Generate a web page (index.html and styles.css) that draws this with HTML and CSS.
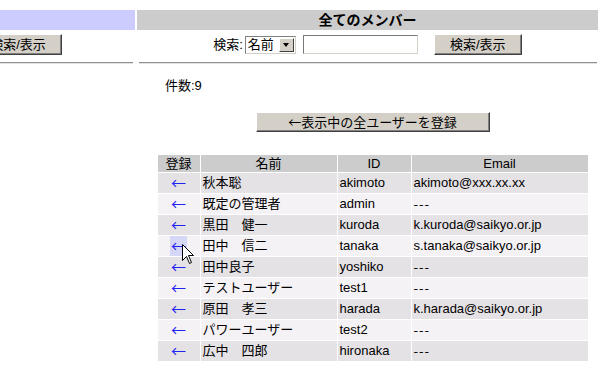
FILE: index.html
```html
<!DOCTYPE html>
<html>

<head>
  <title>全てのメンバー</title>
  <link rel="stylesheet" href="styles.css">
</head>

<body>
  <div class="page">
    <div class="side">
      <div class="side-head"></div>
      <div class="side-bar">
        <button class="btn btn-search btn-cut">検索/表示</button>
      </div>
      <hr class="rule rule-side">
    </div>

    <div class="main">
      <h1 class="main-head">全てのメンバー</h1>
      <form class="search">
        <label for="field">検索:</label>
        <span class="select">
          <select id="field">
            <option value="name">名前</option>
            <option value="id">ID</option>
          </select>
          <span class="select-arrow"></span>
        </span>
        <input type="text" class="query">
        <button type="button" class="btn btn-search">検索/表示</button>
      </form>
      <hr class="rule rule-main">

      <p class="count">件数:9</p>

      <div class="list">
        <button class="btn btn-register"><span class="jp">←表示中の全ユーザーを登録</span></button>

        <table class="members">
          <colgroup>
            <col class="col-add">
            <col class="col-name">
            <col class="col-id">
            <col class="col-mail">
          </colgroup>
          <thead>
            <tr>
              <th>登録</th>
              <th>名前</th>
              <th>ID</th>
              <th>Email</th>
            </tr>
          </thead>
          <tbody>
            <tr><td class="add"><a>←</a></td><td>秋本聡</td><td>akimoto</td><td>akimoto@xxx.xx.xx</td></tr>
            <tr><td class="add"><a>←</a></td><td>既定の管理者</td><td>admin</td><td class="none">---</td></tr>
            <tr><td class="add"><a>←</a></td><td>黒田　健一</td><td>kuroda</td><td>k.kuroda@saikyo.or.jp</td></tr>
            <tr><td class="add"><a class="hover">←</a></td><td>田中　信二</td><td>tanaka</td><td>s.tanaka@saikyo.or.jp</td></tr>
            <tr><td class="add"><a>←</a></td><td>田中良子</td><td>yoshiko</td><td class="none">---</td></tr>
            <tr><td class="add"><a>←</a></td><td>テストユーザー</td><td>test1</td><td class="none">---</td></tr>
            <tr><td class="add"><a>←</a></td><td>原田　孝三</td><td>harada</td><td>k.harada@saikyo.or.jp</td></tr>
            <tr><td class="add"><a>←</a></td><td>パワーユーザー</td><td>test2</td><td class="none">---</td></tr>
            <tr><td class="add"><a>←</a></td><td>広中　四郎</td><td>hironaka</td><td class="none">---</td></tr>
          </tbody>
        </table>
      </div>
    </div>
  </div>

  <!-- mouse pointer -->
  <svg class="cursor" width="13" height="21" viewBox="0 0 13 21">
    <path d="M0.5 0.5 L0.5 16.5 L4.5 12.5 L7.5 19.5 L9.5 18.5 L6.5 11.5 L11.5 11.5 Z" fill="#fff" stroke="#000" stroke-width="1"/>
  </svg>
</body>

</html>
```

FILE: styles.css
```css
body {
  margin: 0;
  font-family: "Liberation Sans", "Noto Sans CJK JP", sans-serif;
  font-size: 13px;
  color: #000;
  background: #fff;
}

.jp {
  font-family: "Noto Sans CJK JP", sans-serif;
}

.page {
  display: flex;
  gap: 2px;
  padding-top: 10px;
}

.side {
  flex: none;
  width: 135px;
  overflow: hidden;
}

.side-head {
  height: 20px;
  background: #ccccff;
}

.side-bar {
  padding-top: 4px;
  height: 21px;
}

.btn-cut {
  margin-left: -26px;
}

.main {
  flex: none;
  width: 461px;
}

.main-head {
  margin: 0;
  height: 20px;
  line-height: 20px;
  background: #cccccc;
  font-size: 14px;
  font-weight: bold;
  text-align: center;
}

.search {
  display: flex;
  justify-content: center;
  align-items: center;
  height: 21px;
  margin: 4px 0 0;
}

.search label {
  margin-right: 2px;
  line-height: 18px;
}

/* classic buttons */
.btn {
  box-sizing: border-box;
  height: 21px;
  padding: 0;
  font-family: "Liberation Sans", "Noto Sans CJK JP", sans-serif;
  font-size: 13px;
  line-height: 17px;
  color: #000;
  background: #d4d0c8;
  border: 1px solid;
  border-color: #ffffff #404040 #404040 #ffffff;
  box-shadow: inset -1px -1px #808080;
}

.btn-search {
  width: 88px;
}

.btn-register {
  display: block;
  width: 234px;
  height: 20px;
  margin: 0 auto;
}

.select {
  box-sizing: border-box;
  display: inline-flex;
  align-items: center;
  width: 51px;
  height: 18px;
  border: 1px solid;
  border-color: #808080 #d4d0c8 #d4d0c8 #808080;
  background: #fff;
}

.select select {
  flex: 1;
  min-width: 0;
  height: 16px;
  padding: 0 0 0 2px;
  border: none;
  background: transparent;
  font-family: "Liberation Sans", "Noto Sans CJK JP", sans-serif;
  font-size: 13px;
  line-height: 16px;
  appearance: none;
  -webkit-appearance: none;
}

.select-arrow {
  box-sizing: border-box;
  position: relative;
  width: 15px;
  height: 14px;
  margin-right: 1px;
  background: #d4d0c8;
  border: 1px solid;
  border-color: #ffffff #404040 #404040 #ffffff;
}

.select-arrow::after {
  content: "";
  position: absolute;
  left: 3px;
  top: 4px;
  border-left: 3.5px solid transparent;
  border-right: 3.5px solid transparent;
  border-top: 4px solid #000;
}

.query {
  box-sizing: border-box;
  width: 115px;
  height: 19px;
  margin: 0 16px 0 7px;
  padding: 0 2px;
  border: 1px solid;
  border-color: #7a7a7a #d4d0c8 #d4d0c8 #7a7a7a;
  font-size: 13px;
}

.rule {
  height: 0;
  margin: 7px 0 0;
  border: 0;
  border-top: 1px solid #909090;
  border-bottom: 1px solid #e2e2e2;
}

.rule-side {
  width: 133px;
  margin-left: 0;
}

.rule-main {
  margin-left: 2px;
  margin-right: 1px;
}

.count {
  margin: 14px 0 0 28px;
  line-height: 16px;
}

.list {
  margin-top: 18px;
  padding-left: 10px;
}

.members {
  table-layout: fixed;
  width: 432px;
  margin: 22px auto 0;
  border-spacing: 1px;
  border-collapse: separate;
}

.col-add { width: 42px; }
.col-name { width: 136px; }
.col-id { width: 73px; }
.col-mail { width: 176px; }

.members th {
  height: 17px;
  padding: 0;
  font-weight: normal;
  line-height: 17px;
  background: #cccccc;
  text-align: center;
}

.members td {
  height: 20px;
  padding: 0 2px;
  line-height: 20px;
  white-space: nowrap;
  overflow: hidden;
}

.members tbody tr:nth-child(odd) td {
  background: #e5e2e5;
}

.members tbody tr:nth-child(even) td {
  background: #f5f2f5;
}

.members td.add {
  text-align: center;
  font-family: "Noto Sans CJK JP", sans-serif;
  font-size: 15px;
  color: #2424f0;
}

.members td.none {
  font-family: "Noto Sans CJK JP", sans-serif;
  letter-spacing: 1px;
}

.add a {
  padding: 0 1px;
}

.add a.hover {
  background: #d6d6f6;
}

.cursor {
  position: absolute;
  left: 182px;
  top: 244px;
}
```
